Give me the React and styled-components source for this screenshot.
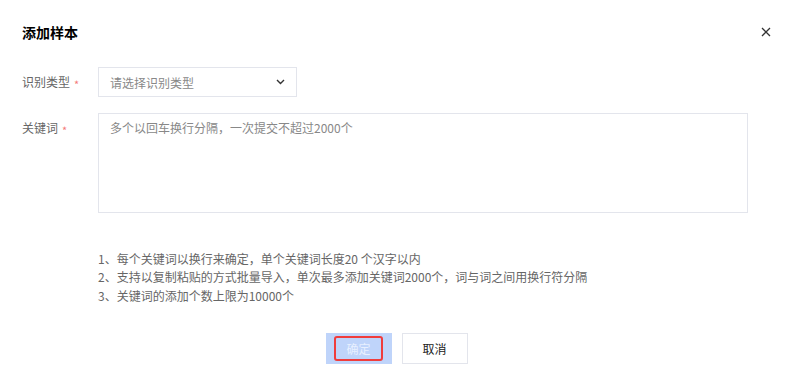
import React from "react";
import styled, { createGlobalStyle } from "styled-components";

const GlobalStyle = createGlobalStyle`
  html, body {
    margin: 0;
    padding: 0;
    background: #fff;
  }
  body {
    font-family: "Noto Sans CJK SC", "Noto Sans", "Liberation Sans", sans-serif;
    font-size: 12px;
    color: #333;
  }
`;

const Dialog = styled.div`
  width: 795px;
  height: 386px;
  box-sizing: border-box;
  background: #fff;
  display: flex;
  flex-direction: column;
`;

const Header = styled.div`
  height: 64px;
  display: flex;
  align-items: center;
  justify-content: space-between;
  padding: 0 24px 0 22px;
  h2 {
    margin: 0;
    font-size: 14px;
    font-weight: 700;
    color: #000;
  }
`;

const CloseBtn = styled.button`
  border: 0;
  background: none;
  padding: 0;
  width: 10px;
  height: 10px;
  display: flex;
  cursor: pointer;
`;

const Form = styled.div`
  padding: 3px 47px 0 22px;
  display: flex;
  flex-direction: column;
  gap: 16px;
`;

const Row = styled.div`
  display: flex;
  align-items: flex-start;
`;

const Label = styled.label`
  width: 76px;
  flex-shrink: 0;
  color: #666;
  font-size: 12px;
  line-height: ${(p) => p.$lh || "30px"};
  span {
    color: #f47a7a;
    font-size: 11px;
    margin-left: 4px;
    position: relative;
    top: 2px;
  }
`;

const Select = styled.div`
  width: 199px;
  height: 30px;
  box-sizing: border-box;
  border: 1px solid #e3e5ec;
  display: flex;
  align-items: center;
  justify-content: space-between;
  padding: 0 11px 0 11px;
  color: #888;
`;

const TextArea = styled.div`
  flex: 1;
  height: 100px;
  box-sizing: border-box;
  border: 1px solid #e3e5ec;
  padding: 6px 11px;
  color: #888;
  line-height: 15px;
`;

const Hints = styled.ul`
  list-style: none;
  margin: 0;
  padding: 0 0 0 98px;
  margin-top: 37px;
  color: #666;
  font-size: 12px;
  line-height: 18.4px;
`;

const Footer = styled.div`
  display: flex;
  justify-content: center;
  gap: 10px;
  margin-top: 28px;
  padding-right: 2px;
`;

const Button = styled.button`
  width: 66px;
  height: 31px;
  box-sizing: border-box;
  font-family: inherit;
  font-size: 12px;
  display: flex;
  align-items: center;
  justify-content: center;
  padding: 0;
  cursor: pointer;
  border: 1px solid ${(p) => (p.$primary ? "#bfd4fa" : "#e3e5ec")};
  background: ${(p) => (p.$primary ? "#bfd4fa" : "#fff")};
  color: ${(p) => (p.$primary ? "#fff" : "#222")};
`;

const Focus = styled.span`
  width: 49px;
  height: 25px;
  box-sizing: border-box;
  border: 2px solid #f03c3c;
  border-radius: 3px;
  display: flex;
  align-items: center;
  justify-content: center;
  color: #e8f0ff;
`;

const App = () => {
  return (
    <Dialog>
      <GlobalStyle />
      <Header>
        <h2>添加样本</h2>
        <CloseBtn aria-label="close">
          <svg width="10" height="10" viewBox="0 0 10 10">
            <path d="M1 1L9 9M9 1L1 9" stroke="#333" strokeWidth="1.3" />
          </svg>
        </CloseBtn>
      </Header>
      <Form>
        <Row>
          <Label>
            识别类型<span>*</span>
          </Label>
          <Select>
            请选择识别类型
            <svg width="9" height="6" viewBox="0 0 9 6">
              <path d="M1 1L4.5 4.5L8 1" fill="none" stroke="#333" strokeWidth="1.4" />
            </svg>
          </Select>
        </Row>
        <Row>
          <Label $lh="30px">
            关键词<span>*</span>
          </Label>
          <TextArea>多个以回车换行分隔，一次提交不超过2000个</TextArea>
        </Row>
      </Form>
      <Hints>
        <li>1、每个关键词以换行来确定，单个关键词长度20 个汉字以内</li>
        <li>2、支持以复制粘贴的方式批量导入，单次最多添加关键词2000个，词与词之间用换行符分隔</li>
        <li>3、关键词的添加个数上限为10000个</li>
      </Hints>
      <Footer>
        <Button $primary>
          <Focus>确定</Focus>
        </Button>
        <Button>取消</Button>
      </Footer>
    </Dialog>
  );
};

export default App;
